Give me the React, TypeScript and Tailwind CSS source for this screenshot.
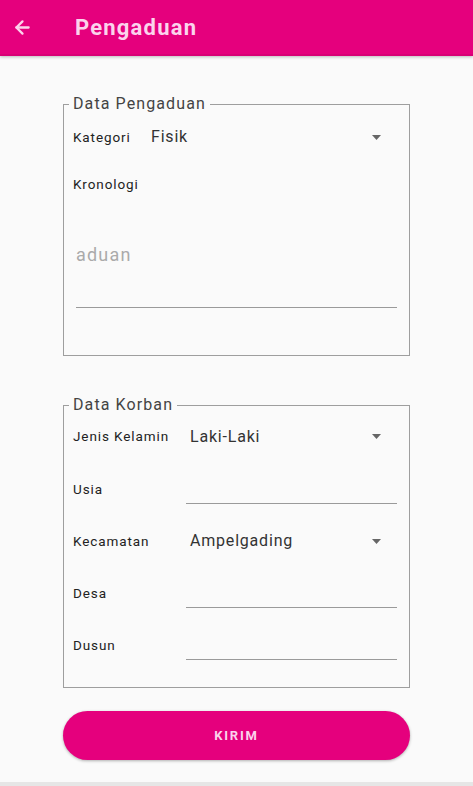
import { ArrowLeft } from 'lucide-react';

function DropArrow() {
  return (
    <svg width="9" height="5" viewBox="0 0 9 5" className="shrink-0">
      <path d="M0 0 L9 0 L4.5 5 Z" fill="#666" />
    </svg>
  );
}

function SelectRow({ label, value, labelWidth, height }: { label: string; value: string; labelWidth: string; height: string }) {
  return (
    <div className={`flex items-center ${height}`}>
      <span className={`${labelWidth} shrink-0 text-[13.5px] tracking-[0.9px] text-[#222]`}>{label}</span>
      <span className="flex-1 pl-[4px] text-[16px] tracking-[0.8px] text-[#333]">{value}</span>
      <div className="mr-[19px]">
        <DropArrow />
      </div>
    </div>
  );
}

function InputRow({ label }: { label: string }) {
  return (
    <div className="flex items-center h-[52px]">
      <span className="w-[113px] shrink-0 text-[13.5px] tracking-[0.9px] text-[#222]">{label}</span>
      <div className="flex-1 h-[30px] mr-[3px] border-b border-[#9a9a9a]" />
    </div>
  );
}

export default function App() {
  return (
    <div className="h-[786px] flex flex-col bg-[#fafafa]" style={{ fontFamily: 'Roboto, "Noto Sans", sans-serif' }}>
      <header className="h-[56px] shrink-0 bg-[#e5007d] flex items-center shadow-[0_1px_3px_rgba(0,0,0,0.25)] border-b-2 border-[#d80076]">
        <ArrowLeft className="ml-[12px] text-[#fbd3ec]" size={21} strokeWidth={2.6} />
        <h1 className="ml-[42px] text-[22px] tracking-[1.2px] font-bold text-[#fbd3ec]">Pengaduan</h1>
      </header>

      <main className="flex-1 px-[63px]">
        <fieldset className="mt-[39px] border border-[#9e9e9e] px-[9px] pb-[47px]">
          <legend className="-ml-[4px] px-[4px] text-[16px] tracking-[1.1px] leading-[18px] text-[#444]">Data Pengaduan</legend>
          <SelectRow label="Kategori" value="Fisik" labelWidth="w-[74px]" height="h-[48px]" />
          <div className="flex items-center h-[46px]">
            <span className="text-[13.5px] tracking-[0.9px] text-[#222]">Kronologi</span>
          </div>
          <div className="h-[101px] mx-[3px] border-b border-[#9a9a9a] pt-[37px]">
            <span className="block text-[18px] tracking-[1.2px] leading-[22px] text-[#aaa]">aduan</span>
          </div>
        </fieldset>

        <fieldset className="mt-[40px] border border-[#9e9e9e] px-[9px] pb-[16px]">
          <legend className="-ml-[4px] px-[4px] text-[16px] tracking-[1.1px] leading-[18px] text-[#444]">Data Korban</legend>
          <div className="mb-[4px]">
            <SelectRow label="Jenis Kelamin" value="Laki-Laki" labelWidth="w-[113px]" height="h-[45px]" />
          </div>
          <InputRow label="Usia" />
          <SelectRow label="Kecamatan" value="Ampelgading" labelWidth="w-[113px]" height="h-[52px]" />
          <InputRow label="Desa" />
          <InputRow label="Dusun" />
        </fieldset>

        <button
          type="button"
          className="mt-[23px] w-full h-[49px] rounded-full bg-[#e5007d] shadow-[0_1px_3px_rgba(0,0,0,0.3)] text-[13px] tracking-[1.8px] font-bold text-[#fbd3ec]"
        >
          KIRIM
        </button>
      </main>

      <div className="h-[4px] shrink-0 bg-[#e6e6e6]" />
    </div>
  );
}
